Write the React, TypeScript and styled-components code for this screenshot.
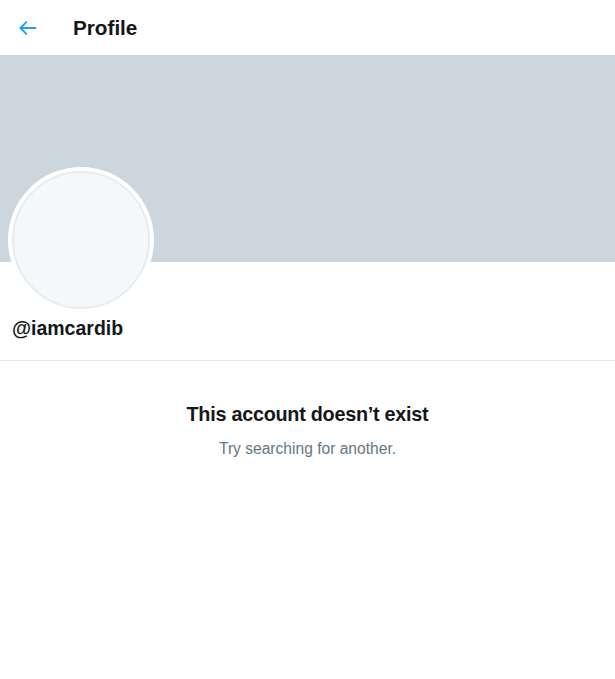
import React from "react";
import styled, { createGlobalStyle } from "styled-components";

const Global = createGlobalStyle`
  html, body { margin: 0; padding: 0; background: #fff; }
  body { font-family: "Liberation Sans", Arial, sans-serif; color: #14171a; }
`;

const Page = styled.div`
  width: 615px;
  display: flex;
  flex-direction: column;
`;

const Header = styled.header`
  height: 55px;
  display: flex;
  align-items: center;
  padding: 0 0 0 18px;
  gap: 35px;
  box-sizing: border-box;
`;

const BackButton = styled.div`
  width: 20px;
  height: 20px;
  display: flex;
  align-items: center;
  justify-content: center;
  color: #1da1f2;
`;

const Title = styled.h1`
  margin: 0;
  font-size: 20.7px;
  font-weight: 700;
  color: #14171a;
`;

const Banner = styled.div`
  height: 207px;
  background: #ccd6dd;
`;

const ProfileInfo = styled.div`
  display: flex;
  flex-direction: column;
  align-items: flex-start;
  padding: 0 12px 0 8px;
  height: 98px;
  border-bottom: 1px solid #e1e8ed;
`;

const AvatarRing = styled.div`
  width: 146px;
  height: 146px;
  margin-top: -95px;
  border-radius: 50%;
  background: #fff;
  padding: 4px;
  box-sizing: border-box;
`;

const AvatarInner = styled.div`
  width: 100%;
  height: 100%;
  border-radius: 50%;
  background: #f5f8fa;
  border: 2px solid #e6ecf0;
  box-sizing: border-box;
`;

const Handle = styled.div`
  margin: 4px 0 0 4px;
  font-size: 19.5px;
  font-weight: 700;
  color: #14171a;
`;

const Empty = styled.section`
  display: flex;
  flex-direction: column;
  align-items: center;
  padding-top: 42px;
`;

const EmptyTitle = styled.h2`
  margin: 0;
  font-size: 19.8px;
  letter-spacing: -0.25px;
  font-weight: 700;
  color: #14171a;
`;

const EmptySub = styled.p`
  margin: 14px 0 0;
  font-size: 15.6px;
  color: #657786;
`;

export default function App() {
  return (
    <Page>
      <Global />
      <Header>
        <BackButton>
          <svg width="20" height="20" viewBox="0 0 24 24" fill="none" stroke="currentColor" strokeWidth="2.2" strokeLinecap="round" strokeLinejoin="round">
            <path d="M21 12H3" />
            <path d="M10 5l-7 7 7 7" />
          </svg>
        </BackButton>
        <Title>Profile</Title>
      </Header>
      <Banner />
      <ProfileInfo>
        <AvatarRing>
          <AvatarInner />
        </AvatarRing>
        <Handle>@iamcardib</Handle>
      </ProfileInfo>
      <Empty>
        <EmptyTitle>This account doesn’t exist</EmptyTitle>
        <EmptySub>Try searching for another.</EmptySub>
      </Empty>
    </Page>
  );
}
